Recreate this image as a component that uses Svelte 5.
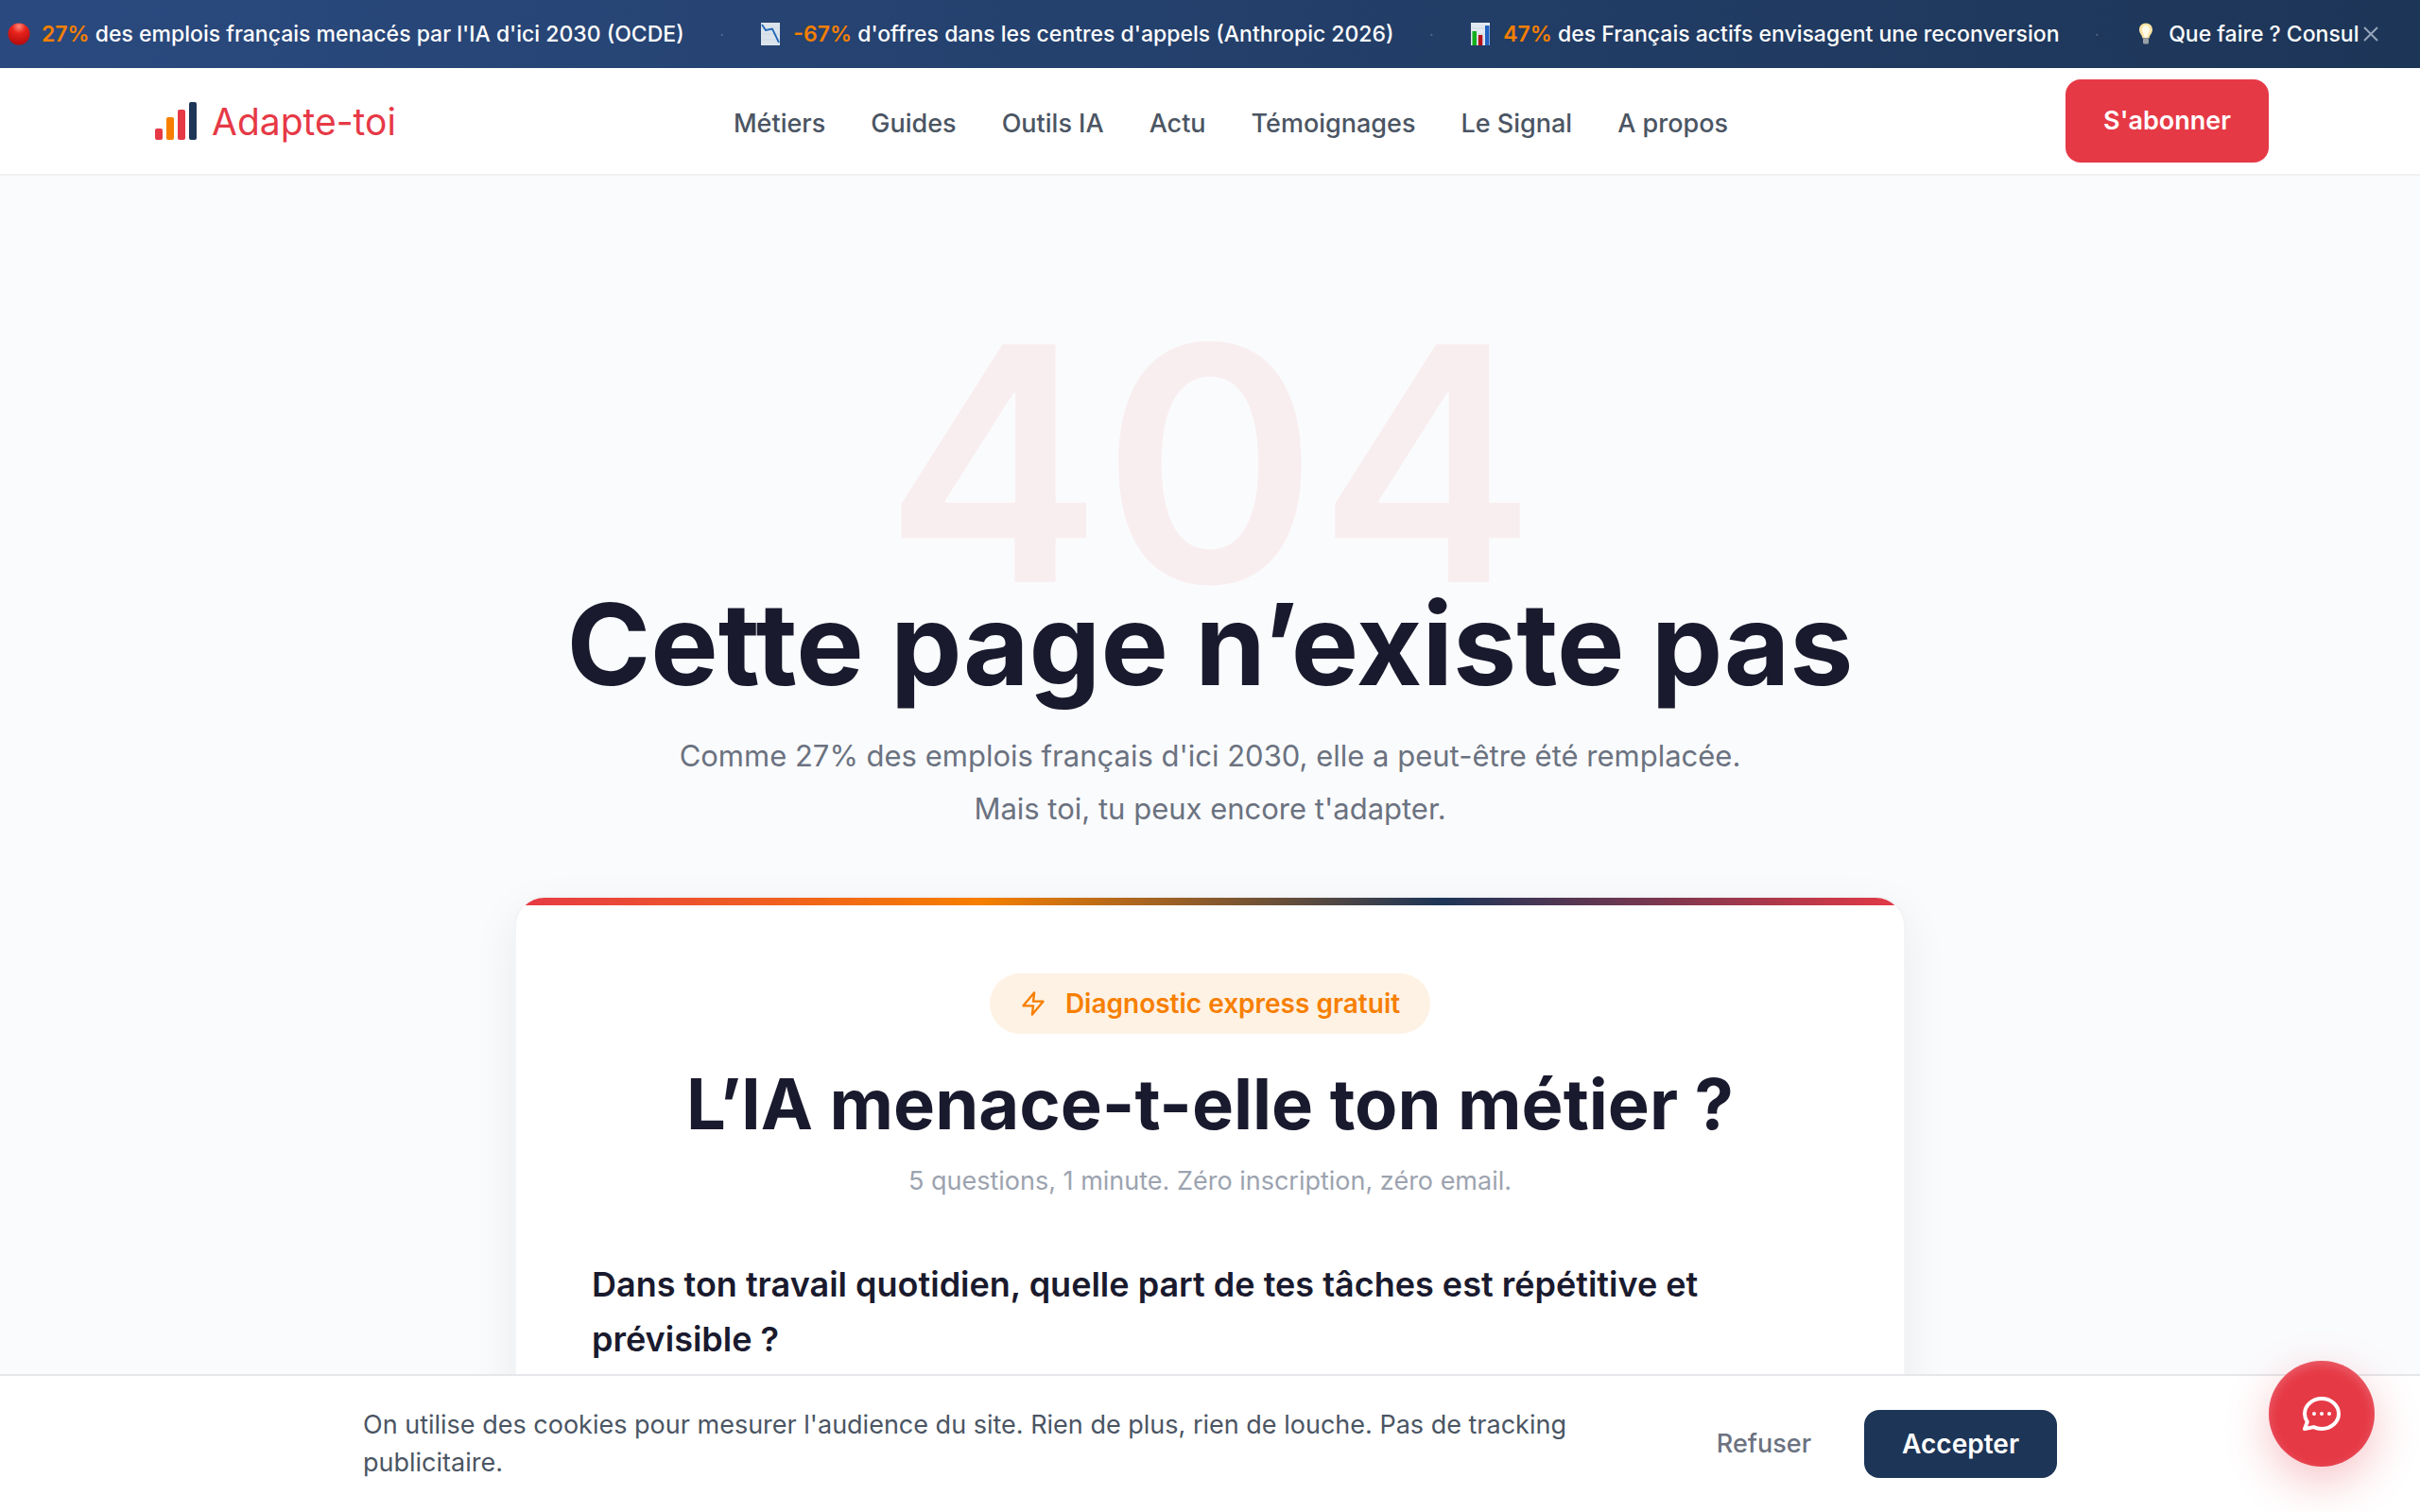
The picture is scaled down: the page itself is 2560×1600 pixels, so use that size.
<script>
  const nav = ['Métiers', 'Guides', 'Outils IA', 'Actu', 'Témoignages', 'Le Signal', 'A propos'];
  let showTicker = $state(true);
  let showCookies = $state(true);
</script>

{#if showTicker}
  <aside class="ticker">
    <div class="track">
      <span class="item">
        <svg class="emoji" viewBox="0 0 24 24" aria-hidden="true">
          <defs>
            <radialGradient id="ball" cx="0.5" cy="0.15" r="0.8">
              <stop offset="0" stop-color="#ff8a7a" />
              <stop offset="0.4" stop-color="#e8231c" />
              <stop offset="1" stop-color="#b80d0d" />
            </radialGradient>
          </defs>
          <circle cx="12" cy="12" r="11.5" fill="url(#ball)" />
        </svg>
        <span><b>27%</b> des emplois français menacés par l'IA d'ici 2030 (OCDE)</span>
      </span>
      <span class="dot">·</span>
      <span class="item">
        <svg class="emoji" viewBox="0 0 24 24" aria-hidden="true">
          <rect x="2" y="0" width="20" height="24" fill="#dbe4ec" />
          <path d="M2 6h20M2 12h20M2 18h20" stroke="#cbd7e0" stroke-width="0.8" />
          <path d="M3 2l4 6 7-1.500 7 14.500" fill="none" stroke="#1f66b8" stroke-width="1.800" />
        </svg>
        <span><b>-67%</b> d'offres dans les centres d'appels (Anthropic 2026)</span>
      </span>
      <span class="dot">·</span>
      <span class="item">
        <svg class="emoji" viewBox="0 0 24 24" aria-hidden="true">
          <rect x="2" y="0" width="20" height="24" fill="#e1e8ef" />
          <path d="M2 6h20M2 12h20M2 18h20" stroke="#cbd7e0" stroke-width="0.8" />
          <rect x="3.500" y="9" width="4.500" height="15" fill="#13b01e" />
          <rect x="9.800" y="13" width="4.500" height="11" fill="#b5121b" />
          <rect x="17" y="3" width="4.500" height="21" fill="#1f62c0" />
        </svg>
        <span><b>47%</b> des Français actifs envisagent une reconversion</span>
      </span>
      <span class="dot">·</span>
      <span class="item">
        <svg class="emoji" viewBox="0 0 24 24" aria-hidden="true">
          <path d="M12 0.500c-4.200 0-7 3-7 7 0 3.500 3 5.500 3.500 9h7c.5-3.500 3.500-5.500 3.500-9 0-4-2.800-7-7-7z" fill="#fbe3a4" />
          <path d="M12 3c-2.500 0-4 2-4 4.500 0 3 2 4 2.500 8h3c.5-4 2.500-5 2.500-8 0-2.500-1.500-4.500-4-4.500z" fill="#fffbe8" />
          <rect x="9" y="16.500" width="6" height="6" rx="1.500" fill="#9aa0a6" />
        </svg>
        <span>Que faire ? Consul</span>
      </span>
    </div>
    <button class="close" aria-label="Fermer" onclick={() => (showTicker = false)}>
      <svg viewBox="0 0 16 16" aria-hidden="true"><path d="M1 1l14 14M15 1L1 15" /></svg>
    </button>
  </aside>
{/if}

<header class="header">
  <a class="brand" href="/">
    <svg viewBox="0 0 44 40" aria-hidden="true">
      <rect x="0" y="28" width="8" height="12" rx="2" fill="#e63946" />
      <rect x="12" y="16" width="8" height="24" rx="2" fill="#f77f00" />
      <rect x="24" y="8" width="8" height="32" rx="2" fill="#e63946" />
      <rect x="36" y="0" width="8" height="40" rx="2" fill="#1d3557" />
    </svg>
    <span>Adapte-toi</span>
  </a>
  <nav>
    {#each nav as label}
      <a href="/">{label}</a>
    {/each}
  </nav>
  <a class="subscribe" href="/">S'abonner</a>
</header>

<main>
  <div class="code" aria-hidden="true">404</div>
  <h1>Cette page n’existe pas</h1>
  <p class="lead">
    Comme 27% des emplois français d'ici 2030, elle a peut-être été remplacée.<br />
    Mais toi, tu peux encore t'adapter.
  </p>

  <section class="card">
    <div class="stripe"></div>
    <div class="body">
      <span class="pill">
        <svg viewBox="0 0 24 24" aria-hidden="true">
          <path d="M13 2L3 14h9l-1 8 10-12h-9l1-8z" />
        </svg>
        Diagnostic express gratuit
      </span>
      <h2>L’IA menace-t-elle ton métier ?</h2>
      <p class="note">5 questions, 1 minute. Zéro inscription, zéro email.</p>
      <p class="question">
        Dans ton travail quotidien, quelle part de tes tâches est répétitive et prévisible ?
      </p>
    </div>
  </section>
</main>

{#if showCookies}
  <div class="cookies" role="region" aria-label="Cookies">
    <div class="inner">
      <p>
        On utilise des cookies pour mesurer l'audience du site. Rien de plus, rien de louche. Pas de
        tracking publicitaire.
      </p>
      <div class="actions">
        <button class="refuse" onclick={() => (showCookies = false)}>Refuser</button>
        <button class="accept" onclick={() => (showCookies = false)}>Accepter</button>
      </div>
    </div>
  </div>
{/if}

<button class="chat" aria-label="Ouvrir le chat">
  <svg viewBox="0 0 24 24" aria-hidden="true">
    <path
      d="M8 12h.01M12 12h.01M16 12h.01M21 12c0 4.418-4.030 8-9 8a9.863 9.863 0 01-4.255-.949L3 20l1.395-3.720C3.512 15.042 3 13.574 3 12c0-4.418 4.030-8 9-8s9 3.582 9 8z"
    />
  </svg>
</button>

<style>
  :global(body) {
    background: #fafbfd;
    font-family: Inter, 'Liberation Sans', sans-serif;
    color: #1a1a2e;
  }
  a {
    text-decoration: none;
    color: inherit;
  }
  button {
    font: inherit;
    border: 0;
    background: none;
    cursor: pointer;
  }
  h1,
  h2,
  p {
    margin: 0;
  }

  .ticker {
    display: flex;
    align-items: center;
    height: 72px;
    padding-right: 40px;
    background: linear-gradient(90deg, #2a4a7f, #1d3557);
    color: #fff;
    font-size: 23px;
    font-weight: 500;
  }
  .track {
    flex: 1;
    min-width: 0;
    display: flex;
    align-items: center;
    gap: 38px;
    padding-left: 8px;
    overflow: hidden;
    white-space: nowrap;
  }
  .item {
    display: flex;
    align-items: center;
    gap: 12px;
  }
  .emoji {
    width: 24px;
    height: 24px;
    flex: none;
  }
  .item b {
    font-weight: 600;
    color: #f77f00;
  }
  .dot {
    color: rgba(255, 255, 255, 0.3);
    font-size: 12px;
  }
  .close {
    padding: 4px;
    display: flex;
  }
  .close svg {
    width: 16px;
    height: 16px;
    stroke: #97a4b8;
    stroke-width: 2;
  }

  .header {
    display: flex;
    align-items: center;
    justify-content: space-between;
    height: 112px;
    padding: 0 160px 0 164px;
    background: #fff;
    border-bottom: 2px solid #f1f2f4;
  }
  .brand {
    display: flex;
    align-items: center;
    gap: 16px;
    font-size: 39px;
    color: #e63946;
  }
  .brand svg {
    width: 44px;
    height: 40px;
  }
  nav {
    display: flex;
    gap: 48px;
    padding-top: 4px;
    font-size: 27px;
    font-weight: 500;
    color: #4b5563;
  }
  .subscribe {
    padding: 0 40px;
    line-height: 88px;
    border-radius: 16px;
    background: #e63946;
    color: #fff;
    font-size: 27px;
    font-weight: 600;
  }

  main {
    display: flex;
    flex-direction: column;
    align-items: center;
    padding: 184px 64px 0;
    text-align: center;
  }
  .code {
    font-size: 346px;
    line-height: 240px;
    font-weight: 600;
    color: #f9eeef;
  }
  h1 {
    font-size: 120px;
    line-height: 144px;
    font-weight: 700;
  }
  .lead {
    margin-top: 18px;
    font-size: 31px;
    line-height: 56px;
    color: #6b7280;
  }
  .card {
    width: 100%;
    max-width: 1468px;
    margin-top: 64px;
    overflow: hidden;
    background: #fff;
    border: 2px solid #f3f4f6;
    border-radius: 32px;
    box-shadow: 0 16px 48px rgba(0, 0, 0, 0.07);
  }
  .stripe {
    height: 8px;
    background: linear-gradient(90deg, #e63946, #f77f00, #1d3557, #e63946);
  }
  .body {
    display: flex;
    flex-direction: column;
    align-items: center;
    padding: 72px 80px 128px;
  }
  .pill {
    display: flex;
    align-items: center;
    gap: 20px;
    padding: 0 32px;
    line-height: 64px;
    border-radius: 32px;
    background: #fef2e5;
    color: #f77f00;
    font-size: 28px;
    font-weight: 600;
  }
  .pill svg {
    width: 28px;
    height: 28px;
    fill: none;
    stroke: currentColor;
    stroke-width: 2;
    stroke-linecap: round;
    stroke-linejoin: round;
  }
  h2 {
    margin-top: 26px;
    font-size: 74px;
    line-height: 96px;
    font-weight: 700;
  }
  .note {
    margin-top: 14px;
    font-size: 27px;
    line-height: 40px;
    color: #9ca3af;
  }
  .question {
    width: 100%;
    margin-top: 60px;
    text-align: left;
    font-size: 36px;
    line-height: 58px;
    font-weight: 600;
  }

  .cookies {
    position: fixed;
    left: 0;
    right: 0;
    bottom: 0;
    background: #fff;
    border-top: 2px solid #e5e7eb;
  }
  .inner {
    display: flex;
    align-items: center;
    gap: 96px;
    max-width: 1792px;
    margin: 0 auto;
    padding: 32px 0;
  }
  .inner p {
    flex: 1;
    font-size: 27px;
    line-height: 40px;
    color: #4b5563;
  }
  .actions {
    display: flex;
    align-items: center;
    gap: 24px;
    font-size: 27px;
    font-weight: 500;
  }
  .refuse {
    padding: 0 32px;
    line-height: 72px;
    color: #6b7280;
  }
  .accept {
    padding: 0 40px;
    line-height: 72px;
    border-radius: 16px;
    background: #1d3557;
    color: #fff;
    font-size: 28px;
    font-weight: 600;
  }

  .chat {
    position: fixed;
    right: 48px;
    bottom: 48px;
    width: 112px;
    height: 112px;
    display: flex;
    align-items: center;
    justify-content: center;
    border-radius: 50%;
    background: #e63946;
    box-shadow:
      0 16px 48px rgba(230, 57, 70, 0.3),
      inset 0 4px 12px rgba(255, 255, 255, 0.2);
  }
  .chat svg {
    width: 48px;
    height: 48px;
    fill: none;
    stroke: #fff;
    stroke-width: 2;
    stroke-linecap: round;
    stroke-linejoin: round;
  }
</style>
